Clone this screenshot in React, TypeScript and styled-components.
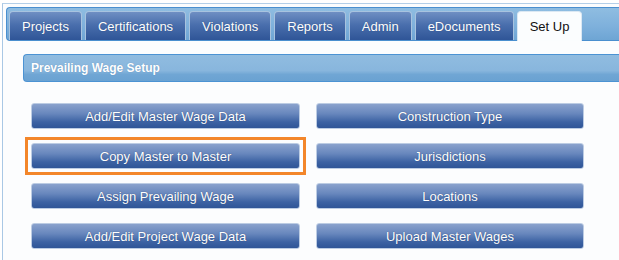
import React from "react";
import styled, {createGlobalStyle} from "styled-components";

const GlobalStyle = createGlobalStyle`
    html, body {
        margin: 0;
        padding: 0;
        background: #ffffff;
        overflow: hidden;
    }
    body {
        font-family: "Liberation Sans", Arial, sans-serif;
    }
`

const Frame = styled.div`
    margin: 3px 0 0 2px;
    min-height: calc(100vh - 3px);
    border-top: 1px solid #b4cfe8;
    border-left: 1px solid #a9c8e5;
    padding: 3px 0 0 3px;
    background: #fcfdfe;
    box-sizing: border-box;
`

const TabStrip = styled.div`
    display: flex;
    align-items: flex-end;
    gap: 3px;
    height: 34px;
    box-sizing: border-box;
    padding: 3px 0 0 2px;
    border: 1px solid #4a8fcf;
    border-right: none;
    border-radius: 4px 0 0 4px;
    background: linear-gradient(to bottom, #8fbde1 0%, #7fb1dc 55%, #6ea5d4 100%);
`

const Tab = styled.div<{ $active?: boolean }>`
    height: ${p => p.$active ? 30 : 29}px;
    margin-bottom: ${p => p.$active ? -1 : 0}px;
    box-sizing: border-box;
    padding: 0 12px;
    display: flex;
    align-items: center;
    font-size: 13px;
    border: 1px solid ${p => p.$active ? "#dbe8f3" : "#a8c3df"};
    border-bottom: none;
    border-radius: 4px 4px 0 0;
    color: ${p => p.$active ? "#111" : "#fff"};
    text-shadow: ${p => p.$active ? "none" : "0 0 1px rgba(20, 40, 80, 0.5)"};
    background: ${p => p.$active
            ? "#fbfdfe"
            : "linear-gradient(to bottom, #6f8fc3 0%, #4a6fad 45%, #2f5597 100%)"};
`

const Content = styled.div`
    padding: 13px 0 0 17px;
`

const SectionHeader = styled.div`
    height: 28px;
    box-sizing: border-box;
    border: 1px solid #4c93d3;
    border-right: none;
    border-radius: 4px 0 0 4px;
    padding-left: 7px;
    display: flex;
    align-items: center;
    font-size: 12px;
    font-weight: bold;
    color: #fff;
    text-shadow: 0 0 1px rgba(30, 70, 120, 0.4);
    background: linear-gradient(to bottom, #90bce0 0%, #88b6dd 60%, #70a6d4 75%, #6aa2d2 100%);
`

const ButtonGrid = styled.div`
    display: grid;
    grid-template-columns: 269px 268px;
    grid-auto-rows: 26px;
    column-gap: 16px;
    row-gap: 14px;
    padding: 21px 0 0 8px;
`

const Button = styled.div<{ $highlight?: boolean }>`
    position: relative;
    box-sizing: border-box;
    display: flex;
    align-items: center;
    justify-content: center;
    border: 1px solid #bccce3;
    border-radius: 3px;
    font-size: 13px;
    color: #fff;
    text-shadow: 0 0 1px rgba(10, 30, 70, 0.6);
    background: linear-gradient(to bottom, #8aa2cd 0%, #6887bd 40%, #3c62a3 75%, #2f5597 100%);

    &::after {
        content: "";
        display: ${p => p.$highlight ? "block" : "none"};
        position: absolute;
        inset: -7px -7px -7px -7px;
        border: 3px solid #f3862a;
    }
`

const tabs = ["Projects", "Certifications", "Violations", "Reports", "Admin", "eDocuments", "Set Up"];
const buttons = [
    "Add/Edit Master Wage Data", "Construction Type",
    "Copy Master to Master", "Jurisdictions",
    "Assign Prevailing Wage", "Locations",
    "Add/Edit Project Wage Data", "Upload Master Wages",
];

export default function App() {
    return (
        <>
            <GlobalStyle/>
            <Frame>
                <TabStrip>
                    {tabs.map(t => <Tab key={t} $active={t === "Set Up"}>{t}</Tab>)}
                </TabStrip>
                <Content>
                    <SectionHeader>Prevailing Wage Setup</SectionHeader>
                    <ButtonGrid>
                        {buttons.map(b =>
                            <Button key={b} $highlight={b === "Copy Master to Master"}>{b}</Button>
                        )}
                    </ButtonGrid>
                </Content>
            </Frame>
        </>
    );
}
